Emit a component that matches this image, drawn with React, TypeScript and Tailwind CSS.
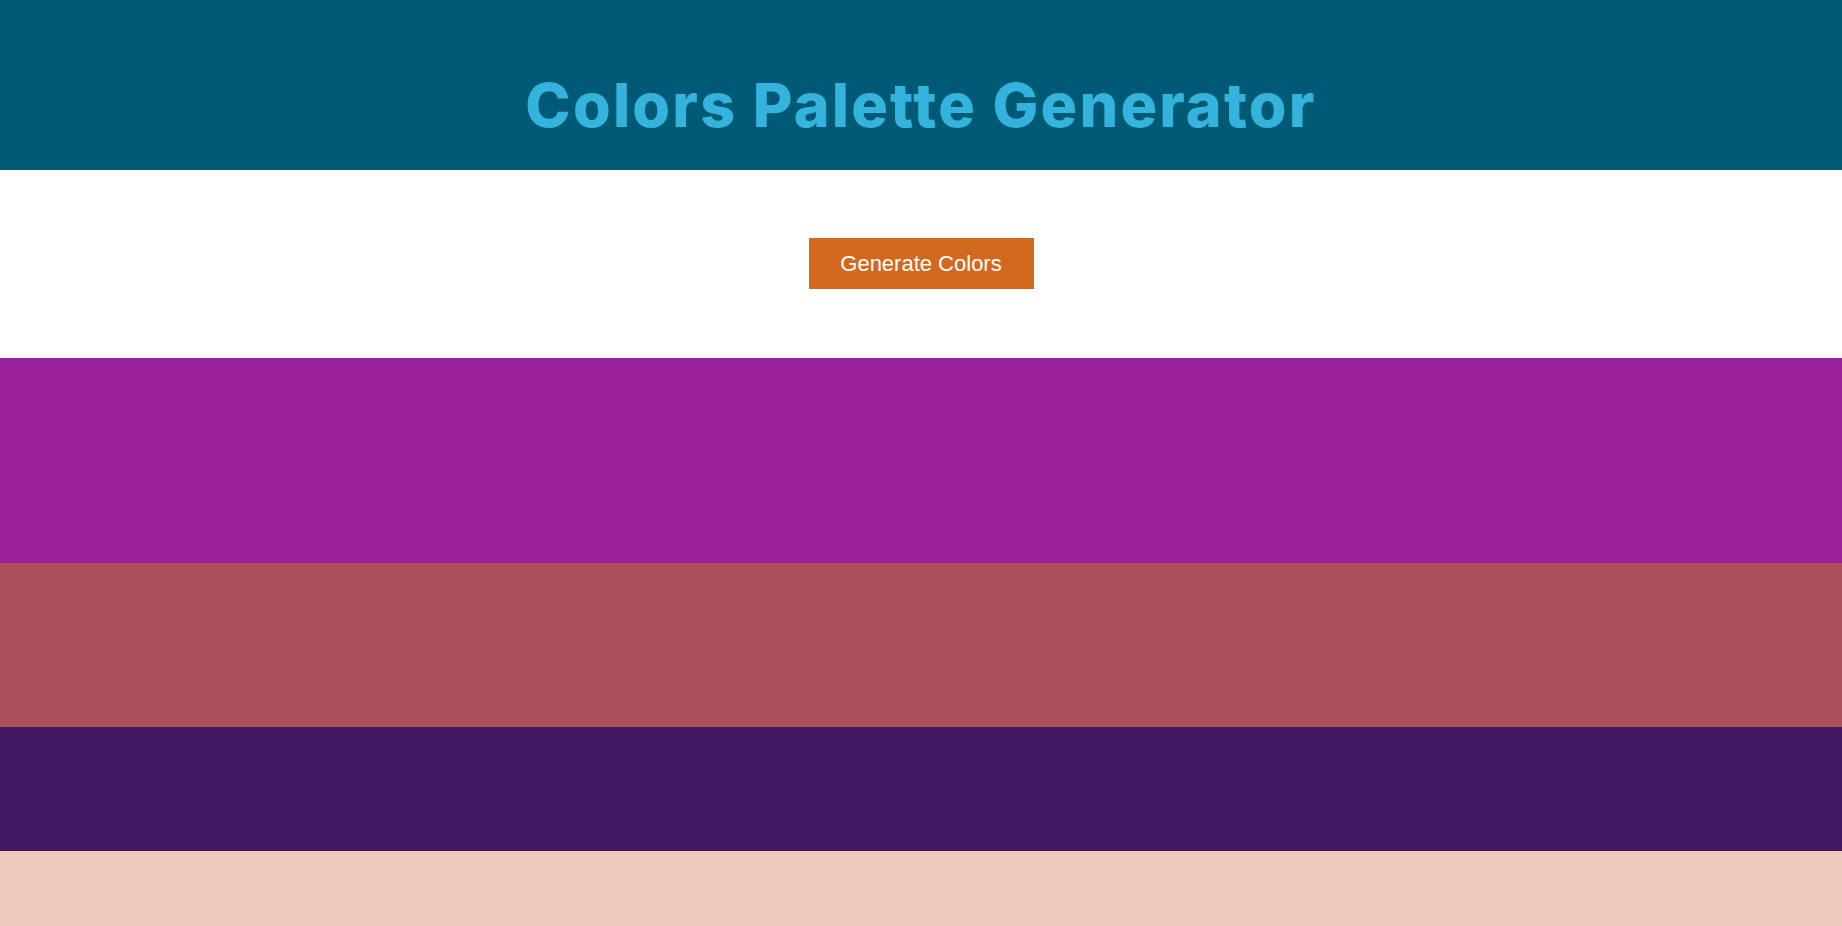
export default function App() {
  const colors = [
    { hex: "#9a209b", h: "h-[205px]" },
    { hex: "#ab4f5a", h: "h-[164px]" },
    { hex: "#431863", h: "h-[124px]" },
    { hex: "#eccbbc", h: "h-[120px]" },
  ];

  return (
    <div className="w-full min-h-screen bg-white">
      <header className="h-[170px] bg-[#005a75] flex items-center justify-center pt-[40px]">
        <h1 className="text-[#34b4dd] text-[61px] font-extrabold tracking-[2.2px] font-['Inter',sans-serif] leading-none">
          Colors Palette Generator
        </h1>
      </header>

      <div className="h-[188px] flex justify-center pt-[68px]">
        <button className="w-[225px] h-[51px] bg-[#d2691e] text-white text-[22px] font-['Liberation_Sans',Arial,sans-serif]">
          Generate Colors
        </button>
      </div>

      <div className="flex flex-col">
        {colors.map((c) => (
          <div key={c.hex} className={c.h} style={{ backgroundColor: c.hex }} />
        ))}
      </div>
    </div>
  );
}
